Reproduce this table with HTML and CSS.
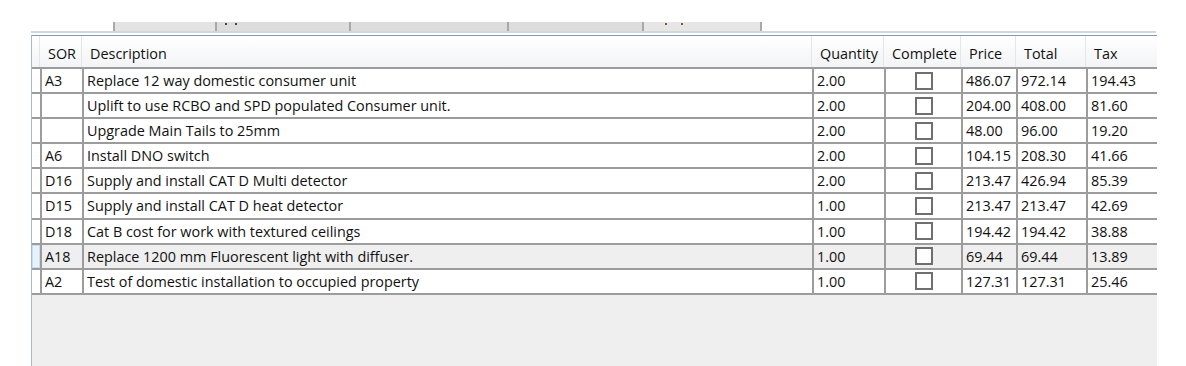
FILE: index.html
```html
<!DOCTYPE html>
<html>
<head>
<meta charset="utf-8">
<link rel="stylesheet" href="styles.css">
</head>
<body>
<div class="window">
  <div class="tabs">
    <div class="tab w1"></div>
    <div class="tab w2"><span class="dots"><i class="dot"></i><i class="dot"></i></span></div>
    <div class="tab w3"></div>
    <div class="tab w4"></div>
    <div class="tab w5 sel"><span class="dots dots-o"><i class="dot"></i><i class="dot"></i></span></div>
  </div>
  <div class="rule"></div>
  <div class="grid">
    <div class="cols hdr">
      <div class="rh"></div>
      <div class="hc">SOR</div>
      <div class="hc hc-desc">Description</div>
      <div class="hc">Quantity</div>
      <div class="hc">Complete</div>
      <div class="hc">Price</div>
      <div class="hc">Total</div>
      <div class="hc">Tax</div>
    </div>

    <div class="cols row">
      <div class="rh"></div>
      <div class="c">A3</div><div class="c">Replace 12 way domestic consumer unit</div><div class="c">2.00</div><div class="c cb"><span class="box"></span></div><div class="c">486.07</div><div class="c">972.14</div><div class="c">194.43</div>
    </div>
    <div class="cols row">
      <div class="rh"></div>
      <div class="c"></div><div class="c">Uplift to use RCBO and SPD populated Consumer unit.</div><div class="c">2.00</div><div class="c cb"><span class="box"></span></div><div class="c">204.00</div><div class="c">408.00</div><div class="c">81.60</div>
    </div>
    <div class="cols row">
      <div class="rh"></div>
      <div class="c"></div><div class="c">Upgrade Main Tails to 25mm</div><div class="c">2.00</div><div class="c cb"><span class="box"></span></div><div class="c">48.00</div><div class="c">96.00</div><div class="c">19.20</div>
    </div>
    <div class="cols row">
      <div class="rh"></div>
      <div class="c">A6</div><div class="c">Install DNO switch</div><div class="c">2.00</div><div class="c cb"><span class="box"></span></div><div class="c">104.15</div><div class="c">208.30</div><div class="c">41.66</div>
    </div>
    <div class="cols row">
      <div class="rh"></div>
      <div class="c">D16</div><div class="c">Supply and install CAT D Multi detector</div><div class="c">2.00</div><div class="c cb"><span class="box"></span></div><div class="c">213.47</div><div class="c">426.94</div><div class="c">85.39</div>
    </div>
    <div class="cols row">
      <div class="rh"></div>
      <div class="c">D15</div><div class="c">Supply and install CAT D heat detector</div><div class="c">1.00</div><div class="c cb"><span class="box"></span></div><div class="c">213.47</div><div class="c">213.47</div><div class="c">42.69</div>
    </div>
    <div class="cols row">
      <div class="rh"></div>
      <div class="c">D18</div><div class="c">Cat B cost for work with textured ceilings</div><div class="c">1.00</div><div class="c cb"><span class="box"></span></div><div class="c">194.42</div><div class="c">194.42</div><div class="c">38.88</div>
    </div>
    <div class="cols row hover">
      <div class="rh"></div>
      <div class="c">A18</div><div class="c">Replace 1200 mm Fluorescent light with diffuser.</div><div class="c">1.00</div><div class="c cb"><span class="box"></span></div><div class="c">69.44</div><div class="c">69.44</div><div class="c">13.89</div>
    </div>
    <div class="cols row">
      <div class="rh"></div>
      <div class="c">A2</div><div class="c">Test of domestic installation to occupied property</div><div class="c">1.00</div><div class="c cb"><span class="box"></span></div><div class="c">127.31</div><div class="c">127.31</div><div class="c">25.46</div>
    </div>
    <div class="empty"></div>
  </div>
</div>
</body>
</html>
```

FILE: styles.css
```css
html, body {
  margin: 0;
  padding: 0;
  background: #ffffff;
}
body {
  font-family: "Open Sans", "Noto Sans", sans-serif;
  font-size: 14.4px;
  color: #111111;
}
.window {
  width: 1186px;
  height: 366px;
  overflow: hidden;
  display: flex;
  flex-direction: column;
}
.tabs {
  display: flex;
  margin-top: 22px;
  margin-left: 113px;
  height: 9px;
  flex: none;
}
.tab {
  height: 9px;
  background: #dddddd;
  border-left: 2px solid #a9a9a9;
  box-sizing: border-box;
}
.dots {
  display: flex;
  gap: 8px;
  padding: 1px 0 0 8px;
}
.dot {
  display: block;
  width: 2px;
  height: 2px;
  background: #444444;
}
.dots-o { padding-left: 21px; gap: 14px; }
.dots-o .dot { background: #8a5a20; }
.w1 { width: 102px; background: #e3e3e3; }
.w2 { width: 134px; }
.w3 { width: 158px; }
.w4 { width: 135px; }
.w5 { width: 120px; border-right: 2px solid #a9a9a9; background: #e6e6e6; }
.rule {
  margin-left: 31px;
  width: 1125px;
  height: 2px;
  flex: none;
  background: #d6d6d6;
}
.grid {
  margin-top: 2px;
  margin-left: 31px;
  width: 1125px;
  flex: 1;
  border-top: 1px solid #7d9bbd;
  border-left: 1px solid #a7bad0;
  display: flex;
  flex-direction: column;
}
.cols {
  display: grid;
  grid-template-columns: 8px 42px 730px 72px 77px 55px 70px 70px;
  flex: none;
}
.hdr {
  height: 31px;
  background: linear-gradient(#ffffff, #f3f4f6);
  border-bottom: 2px solid #9c9c9c;
}
.hdr .rh {
  border-right: 1px solid #e4e6e9;
}
.hc {
  padding: 8px 0 0 8px;
  white-space: nowrap;
  border-right: 1px solid #e4e6e9;
  line-height: 20px;
}
.hc:last-child { border-right: none; }
.row {
  height: 25.1px;
  box-sizing: border-box;
  border-bottom: 2px solid #9c9c9c;
  background: #ffffff;
}
.row .rh {
  background: #ffffff;
}
.c {
  border-left: 2px solid #9c9c9c;
  padding-left: 3px;
  line-height: 23px;
  white-space: nowrap;
  overflow: hidden;
}
.cb {
  display: flex;
  align-items: center;
  justify-content: center;
}
.box {
  width: 18px;
  height: 18px;
  box-sizing: border-box;
  border: 2px solid #6f6f6f;
  background: #ffffff;
  margin-left: -3px;
}
.hover {
  background: #efefef;
}
.hover .rh {
  background: #e7f2fb;
  box-shadow: inset 0 0 0 1px #c5e0f5;
}
.empty {
  flex: 1;
  background: #efefef;
}
```
